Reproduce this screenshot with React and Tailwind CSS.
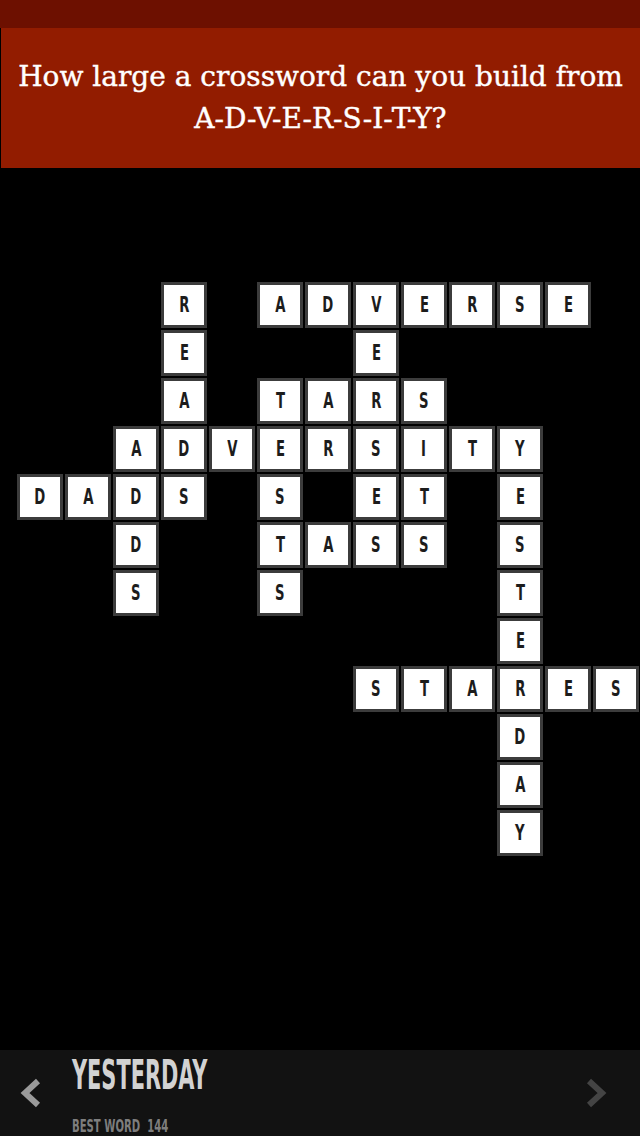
const ROWS = [
  '...R.ADVERSE.',
  '...E...E.....',
  '...A.TARS....',
  '..ADVERSITY..',
  'DADS.S.ET.E..',
  '..D..TASS.S..',
  '..S..S....T..',
  '..........E..',
  '.......STARES',
  '..........D..',
  '..........A..',
  '..........Y..',
];

function Chevron({ dir, className }) {
  const points = dir === 'left' ? '19,3 6,15 19,27' : '5,3 18,15 5,27';
  return (
    <svg width="24" height="30" viewBox="0 0 24 30" className={className}>
      <polyline points={points} fill="none" stroke="currentColor" strokeWidth="6" strokeLinejoin="miter" />
    </svg>
  );
}

function Cell({ ch }) {
  if (ch === '.') return <div className="h-[46px] w-[46px]" />;
  return (
    <div className="flex h-[46px] w-[46px] items-center justify-center border-[3px] border-[#3c3c3c] bg-white">
      <span className="inline-block scale-x-[0.7] text-[21px] font-bold leading-none text-[#1c1c1c] [font-family:'DejaVu_Sans_Condensed','DejaVu_Sans',sans-serif]">
        {ch}
      </span>
    </div>
  );
}

export default function App() {
  return (
    <div className="flex h-[1136px] w-[640px] flex-col overflow-hidden bg-black">
      {/* header */}
      <div className="h-[28px] bg-[#6d1000]" />
      <div className="ml-px flex h-[140px] items-center justify-center bg-[#921c00] text-center">
        <p className="text-[28px] leading-[42px] text-white [font-family:'DejaVu_Serif',serif] [-webkit-text-stroke:0.4px_white]">
          How large a crossword can you build from
          <br />
          A-D-V-E-R-S-I-T-Y?
        </p>
      </div>

      {/* board */}
      <div className="flex-1 pl-[17px] pt-[114px]">
        <div className="grid grid-cols-[repeat(13,46px)] gap-[2px]">
          {ROWS.map((row, r) =>
            row.split('').map((ch, c) => <Cell key={r + '-' + c} ch={ch} />)
          )}
        </div>
      </div>

      {/* footer */}
      <div className="flex h-[86px] items-start bg-[#121212]">
        <div className="flex h-full w-[72px] items-center pl-[19px]">
          <Chevron dir="left" className="text-[#9a9a9a]" />
        </div>
        <div className="flex flex-1 flex-col pt-[5px]">
          <span className="inline-block origin-left scale-x-[0.58] text-[40px] font-bold leading-[40px] text-[#d2d2d2] [font-family:'DejaVu_Sans_Condensed','DejaVu_Sans',sans-serif]">
            YESTERDAY
          </span>
          <span className="mt-[23px] inline-block origin-left scale-x-[0.66] text-[17px] font-bold leading-[16px] text-[#7e7e7e] [font-family:'DejaVu_Sans_Condensed','DejaVu_Sans',sans-serif]">
            BEST WORD&nbsp;&nbsp;144
          </span>
        </div>
        <div className="flex h-full items-center pr-[32px]">
          <Chevron dir="right" className="text-[#444444]" />
        </div>
      </div>
    </div>
  );
}
